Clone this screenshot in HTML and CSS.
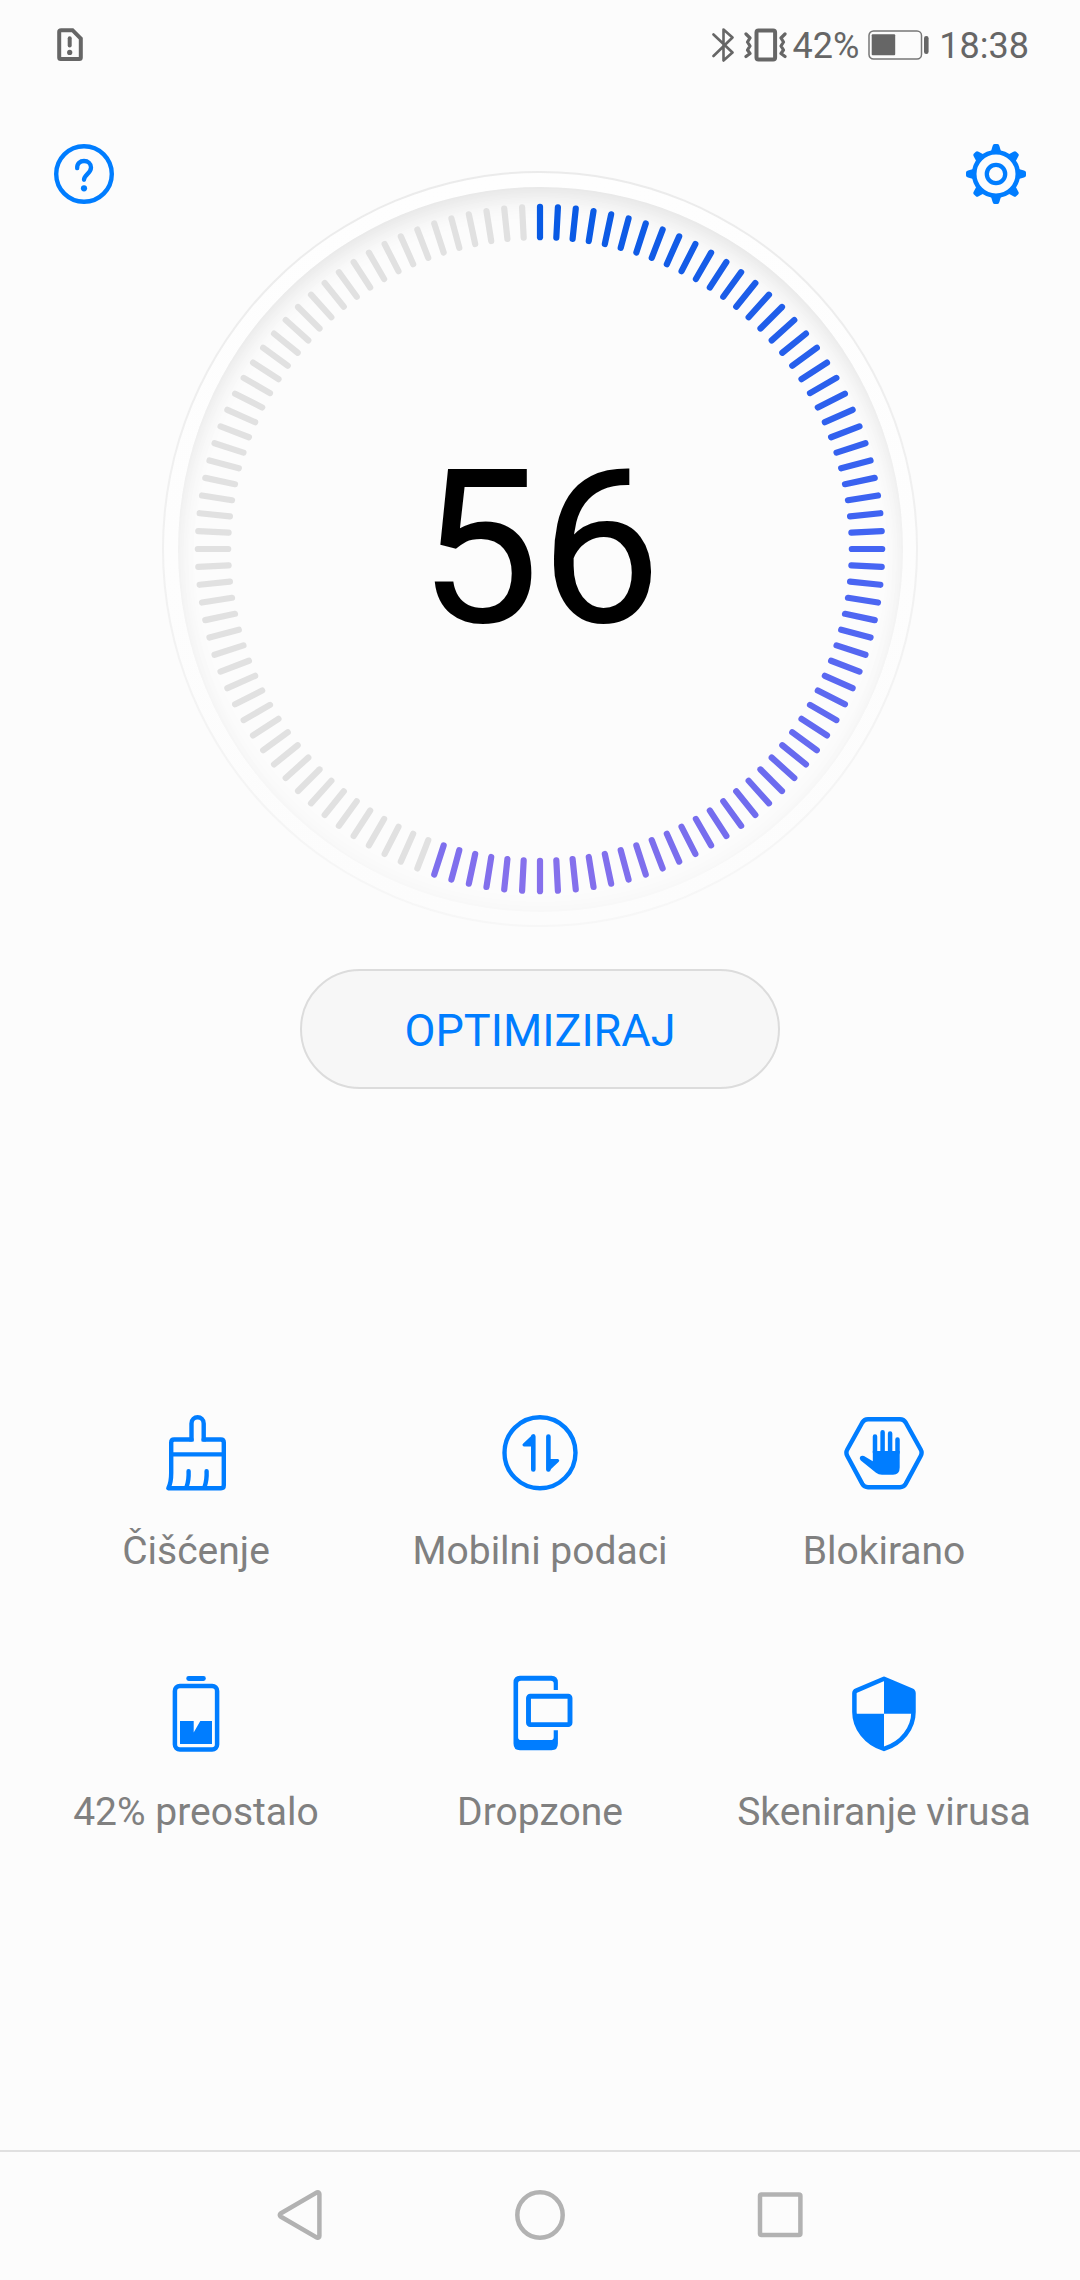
FILE: index.html
```html
<!DOCTYPE html>
<html lang="hr">
<head>
<meta charset="utf-8">
<title>Optimizacija</title>
<link rel="stylesheet" href="styles.css">
</head>
<body>
<div class="screen">
  <header class="status">
    <svg class="sim" width="26" height="34" viewBox="0 0 26 34"><path d="M4.200 2.200H15.500L23.800 10.500V29.500Q23.800 31 22.300 31H3.700Q2.200 31 2.200 29.500V3.700Q2.200 2.200 4.200 2.200Z" fill="none" stroke="#666" stroke-width="4"/><path d="M12.700 10.200V17.500" stroke="#666" stroke-width="4" stroke-linecap="round"/><circle cx="12.700" cy="24.400" r="2.600" fill="#666"/></svg>
    <svg class="bt" width="22" height="36" viewBox="0 0 22 36"><path d="M1.500 7.500 20.500 25.500 11.500 33.500V2.500L20.500 10.500 1.500 29" fill="none" stroke="#666" stroke-width="2.600" stroke-linecap="round" stroke-linejoin="round"/></svg>
    <svg class="vib" width="44" height="36" viewBox="0 0 44 36"><rect x="12.500" y="3.500" width="18.600" height="29" rx="2" fill="none" stroke="#666" stroke-width="4"/><path d="M2 7 6 11 3.500 15 6 19 3.500 23 6 26.500 2 29.500M41 7 37 11 39.500 15 37 19 39.500 23 37 26.500 41 29.500" fill="none" stroke="#666" stroke-width="3.200" stroke-linecap="round" stroke-linejoin="round"/></svg>
    <span class="pct">42%</span>
    <svg class="bat" width="62" height="30" viewBox="0 0 62 30"><rect x="1" y="1" width="52.500" height="28" rx="4.500" fill="none" stroke="#777" stroke-width="1.500"/><rect x="3.700" y="4.200" width="23.500" height="21" rx="1" fill="#666"/><rect x="56" y="6" width="4.600" height="18" rx="2.200" fill="#666"/></svg>
    <span class="time">18:38</span>
  </header>

  <div class="actions">
    <svg width="60" height="60" viewBox="0 0 60 60"><circle cx="30" cy="30" r="27.800" fill="none" stroke="#007dff" stroke-width="4.400"/><path d="M23.200 24.200C22.800 19.600 26.200 17 30 17C34 17 37 19.600 37 23.500C37 29.500 30 30.500 30 35.800" fill="none" stroke="#007dff" stroke-width="4.300" stroke-linecap="round"/><circle cx="30" cy="44.300" r="3.100" fill="#007dff"/></svg>
    <svg width="60" height="60" viewBox="0 0 60 60"><g fill="#007dff"><g id="teeth"><path id="tooth" d="M24.500 9 26.600 2Q27 0 28.500 0H31.500Q33 0 33.400 2L35.500 9Z"/><use href="#tooth" transform="rotate(90 30 30)"/><use href="#tooth" transform="rotate(180 30 30)"/><use href="#tooth" transform="rotate(270 30 30)"/></g><use href="#teeth" transform="rotate(45 30 30)"/></g><circle cx="30" cy="30" r="21.800" fill="none" stroke="#007dff" stroke-width="4.600"/><circle cx="30" cy="30" r="9.200" fill="none" stroke="#007dff" stroke-width="4.300"/></svg>
  </div>

  <main>
    <div class="gauge">
      <div class="disc">
        <svg class="ticks" width="720" height="720" viewBox="-360 -360 720 720"></svg>
        <span class="score">56</span>
      </div>
    </div>
    <button class="optimize">OPTIMIZIRAJ</button>
    <div class="grid">
      <div class="tile">
        <svg width="80" height="80" viewBox="0 0 80 80"><g fill="none" stroke="#007dff" stroke-width="4.400" stroke-linecap="round" stroke-linejoin="round"><path stroke-linecap="butt" d="M35.500 28.500V10.500C35.500 2.200 47.700 2.200 47.700 10.500V28.500"/><path d="M35.500 26.500H18.200Q15.200 26.500 15.200 29.500V60Q15.200 70 12.300 75.200H65Q67.800 75.200 67.800 72.200V29.500Q67.800 26.500 64.800 26.500H47.700M15.200 41.400H67.800M32.600 58.200Q33 67.500 30.500 74M50.600 58.200Q51 67.500 48.500 74"/></g></svg>
        <span>Čišćenje</span>
      </div>
      <div class="tile">
        <svg width="80" height="80" viewBox="0 0 80 80"><circle cx="40" cy="39.700" r="35.500" fill="none" stroke="#007dff" stroke-width="4.400"/><g fill="#007dff" stroke="#007dff" stroke-linejoin="round" stroke-linecap="round"><path stroke-width="4.600" d="M33.300 23.500V56.500M48.400 23.500V56.500"/><path stroke-width="3" d="M33.500 22.800 24 31.900H33.500ZM48.200 56.700 57.700 47.600H48.200Z"/></g></svg>
        <span>Mobilni podaci</span>
      </div>
      <div class="tile">
        <svg width="80" height="80" viewBox="0 0 80 80"><path d="M3.300 36.500 18.300 9.500Q20.300 6.200 24 6.200H56Q59.700 6.200 61.700 9.500L76.700 36.500Q78.500 39.700 76.700 43L61.700 70.900Q59.700 74.200 56 74.200H24Q20.300 74.200 18.300 70.900L3.300 43Q1.500 39.700 3.300 36.500Z" fill="none" stroke="#007dff" stroke-width="4.400"/><path d="M28.800 38H55.700V54.500Q55.700 61.700 49 61.700H38Q34.500 61.700 32 59.700L16.800 47.500Q15.200 45.500 16 44Q17.500 42 20 43L28.800 48.200Z" fill="#007dff"/><path d="M31 39.500V23.500M38.600 39.500V19.200M46.100 39.500V20.500M53.500 39.500V26.500" stroke="#007dff" stroke-width="4.500" stroke-linecap="round"/></svg>
        <span>Blokirano</span>
      </div>
      <div class="tile">
        <svg width="80" height="80" viewBox="0 0 80 80"><rect x="30.300" y="2" width="19.500" height="4.900" rx="2.300" fill="#007dff"/><rect x="18.900" y="11.900" width="42.200" height="63.600" rx="5" fill="none" stroke="#007dff" stroke-width="4.500"/><path d="M24 47H37.700V58.500L44.300 47H56V70H24Z" fill="#007dff"/></svg>
        <span>42% preostalo</span>
      </div>
      <div class="tile">
        <svg width="80" height="80" viewBox="0 0 80 80"><path fill="#007dff" d="M20 1.700H51.500Q57.900 1.700 57.900 8.500V16H53.700V9.500Q53.700 6.700 50.800 6.700H21Q18.100 6.700 18.100 9.500V63.200Q18.100 66 21 66H50.800Q53.700 66 53.700 63.200V56.300H57.900V69.500Q57.900 76.300 51.500 76.300H20Q13.500 76.300 13.500 69.500V8.500Q13.500 1.700 20 1.700Z"/><rect x="28.500" y="22.200" width="41.500" height="28.400" rx="1.800" fill="none" stroke="#007dff" stroke-width="4.900"/></svg>
        <span>Dropzone</span>
      </div>
      <div class="tile">
        <svg width="80" height="80" viewBox="0 0 80 80"><path d="M40 4.700 67.800 16.600Q69.500 17.400 69.500 19.300V38C69.500 54 58 69.500 40 74.900C22 69.500 10.400 54 10.400 38V19.300Q10.400 17.400 12.200 16.600Z" fill="none" stroke="#007dff" stroke-width="4.500" stroke-linejoin="round"/><path d="M40 4.700 69.500 17.500V39.700H40ZM10.400 39.700H40V74.900C22 69.500 11 55 10.400 39.700Z" fill="#007dff"/></svg>
        <span>Skeniranje virusa</span>
      </div>
    </div>
  </main>

  <nav class="navbar">
    <svg width="52" height="52" viewBox="0 0 52 52"><path d="M7 24.200 43 3.400Q45.400 2.800 45.400 5V47Q45.400 49.200 43 48.600L7 27.800Q4.500 26 7 24.200Z"/></svg>
    <svg width="52" height="52" viewBox="0 0 52 52"><circle cx="26" cy="26" r="22.700"/></svg>
    <svg width="52" height="52" viewBox="0 0 52 52"><rect x="6" y="5.600" width="40.400" height="40.400" rx="1.500"/></svg>
  </nav>
</div>
<script src="gauge.js"></script>
</body>
</html>
```
FILE: styles.css
```css
* {
  box-sizing: border-box;
}

body {
  margin: 0;
  background: #fcfcfc;
  font-family: Roboto, sans-serif;
}

.screen {
  width: 1080px;
  height: 2280px;
  display: flex;
  flex-direction: column;
}

svg {
  display: block;
  flex: none;
}

.status {
  height: 90px;
  display: flex;
  align-items: center;
  padding: 0 51px 0 57px;
  font-size: 36px;
  line-height: 42px;
  color: #666;
}

.bt {
  margin-left: auto;
}

.vib {
  margin-left: 10px;
}

.pct {
  margin-left: 5px;
}

.bat {
  margin-left: 9px;
  margin-right: 9px;
}

.pct,
.time {
  position: relative;
  top: 1px;
}

.actions {
  height: 60px;
  margin-top: 54px;
  padding: 0 54px;
  display: flex;
  justify-content: space-between;
}

main {
  flex: 1;
  display: flex;
  flex-direction: column;
  align-items: center;
}

.gauge {
  width: 756px;
  height: 756px;
  margin-top: -33px;
  display: flex;
  align-items: center;
  justify-content: center;
  border-radius: 50%;
  background: linear-gradient(#fefefe, #fcfcfc) padding-box, linear-gradient(#ebebeb, #f7f7f7) border-box;
  border: 2px solid transparent;
}

.disc {
  width: 725px;
  height: 725px;
  border-radius: 50%;
  display: grid;
  place-items: center;
  background: #fcfcfc;
  box-shadow: inset 0 16px 26px -6px rgba(0, 0, 0, 0.08), inset 0 0 26px rgba(0, 0, 0, 0.035);
}

.ticks,
.score {
  grid-area: 1 / 1;
}

.score {
  font-size: 216px;
  line-height: 252px;
  color: #000;
}

.optimize {
  width: 480px;
  height: 120px;
  margin-top: 42px;
  padding: 2px 0 0;
  border: 2px solid #dcdcdc;
  border-radius: 60px;
  background: #f7f7f7;
  font: 45px Roboto, sans-serif;
  color: #007dff;
}

.grid {
  width: 1032px;
  margin-top: 324px;
  display: grid;
  grid-template-columns: repeat(3, 1fr);
  grid-auto-rows: 261px;
}

.tile {
  display: flex;
  flex-direction: column;
  align-items: center;
  gap: 35px;
  font-size: 39px;
  line-height: 46px;
  white-space: nowrap;
  color: #808080;
}

.navbar {
  height: 130px;
  padding-bottom: 2px;
  border-top: 2px solid #e0e0e0;
  display: flex;
  align-items: center;
  justify-content: center;
  gap: 188px;
  fill: none;
  stroke: #b2b2b2;
  stroke-width: 4.500px;
}
```
FILE: gauge.js
```js
// Draws the 120 ticks of the score dial, the first 67 of them coloured.
const dial = document.querySelector('.ticks');
const TICKS = 120;
const FILLED = 67;
const stops = [[8, 90, 228], [68, 100, 243], [134, 112, 236]];

function tickColor(i) {
  if (i >= FILLED) return '#e1e1e1';
  const half = TICKS / 2;
  const byAngle = 2 * (i > half ? TICKS - i : i) / half;
  const byHeight = 1 - Math.cos(i * Math.PI / half);
  const t = (byAngle + byHeight) / 2;
  const k = t < 1 ? 0 : 1;
  const mix = stops[k].map((c, n) => Math.round(c + (stops[k + 1][n] - c) * (t - k)));
  return `rgb(${mix})`;
}

for (let i = 0; i < TICKS; i++) {
  const line = document.createElementNS('http://www.w3.org/2000/svg', 'line');
  line.setAttribute('y1', -342.2);
  line.setAttribute('y2', -311.8);
  line.setAttribute('stroke', tickColor(i));
  line.setAttribute('stroke-width', 6.2);
  line.setAttribute('stroke-linecap', 'round');
  line.setAttribute('transform', `rotate(${i * 360 / TICKS})`);
  dial.append(line);
}
```
